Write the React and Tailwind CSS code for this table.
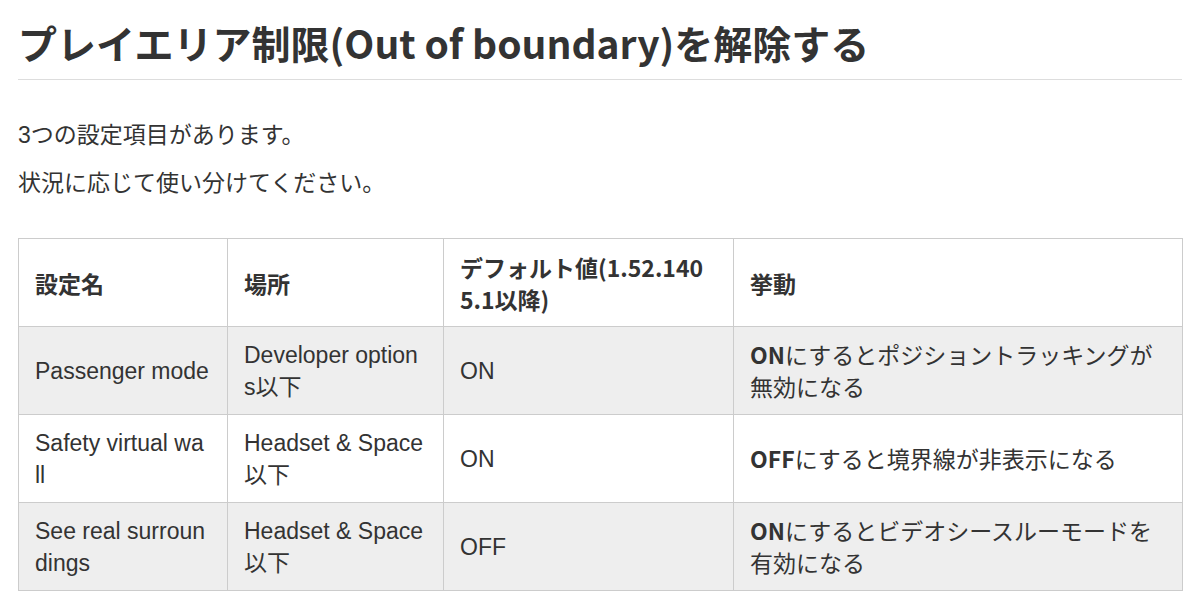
import React from "react";

const jp = "font-['Liberation_Sans','Noto_Sans_CJK_JP',sans-serif]";
const jpBold = "font-['Noto_Sans_CJK_JP',sans-serif] font-bold";

// ── table data (line breaks follow the narrow columns) ──
const rows = [
  {
    name: ["Passenger mode"],
    place: ["Developer option", "s以下"],
    def: "ON",
    lead: "ON",
    act: ["にするとポジショントラッキングが", "無効になる"],
    bg: "bg-[#eeeeee]",
  },
  {
    name: ["Safety virtual wa", "ll"],
    place: ["Headset & Space", "以下"],
    def: "ON",
    lead: "OFF",
    act: ["にすると境界線が非表示になる"],
    bg: "bg-white",
  },
  {
    name: ["See real surroun", "dings"],
    place: ["Headset & Space", "以下"],
    def: "OFF",
    lead: "ON",
    act: ["にするとビデオシースルーモードを", "有効になる"],
    bg: "bg-[#eeeeee]",
  },
];

const Lines = ({ lines }) =>
  lines.map((l, i) => (
    <span key={i} className="block whitespace-nowrap">
      {l}
    </span>
  ));

const cell = "border border-[#cccccc] px-[16px] py-0 align-middle text-left";

export default function App() {
  return (
    <div className={`min-h-[610px] bg-white px-[18px] text-[#333333] ${jp}`}>
      {/* Title */}
      <h1
        className={`pt-[18px] pb-[13px] border-b border-[#dddddd] text-[39px] leading-[48px] whitespace-nowrap ${jpBold}`}
      >
        プレイエリア制限(Out of boundary)を解除する
      </h1>

      <p className="mt-[39px] text-[23px] leading-[32px]">3つの設定項目があります。</p>
      <p className="mt-[16px] text-[23px] leading-[32px]">状況に応じて使い分けてください。</p>

      {/* Settings table */}
      <table className="mt-[39px] w-[1164px] table-fixed border-collapse text-[23px] leading-[32px]">
        <colgroup>
          <col className="w-[209px]" />
          <col className="w-[216px]" />
          <col className="w-[290px]" />
          <col className="w-[449px]" />
        </colgroup>
        <thead>
          <tr className="h-[88px] bg-white">
            <th className={`${cell} ${jpBold}`}>設定名</th>
            <th className={`${cell} ${jpBold}`}>場所</th>
            <th className={`${cell} ${jpBold}`}>
              <Lines lines={["デフォルト値(1.52.140", "5.1以降)"]} />
            </th>
            <th className={`${cell} ${jpBold}`}>挙動</th>
          </tr>
        </thead>
        <tbody>
          {rows.map((r, i) => (
            <tr key={i} className={`h-[88px] ${r.bg}`}>
              <td className={cell}>
                <Lines lines={r.name} />
              </td>
              <td className={cell}>
                <Lines lines={r.place} />
              </td>
              <td className={cell}>{r.def}</td>
              <td className={cell}>
                <span className="block whitespace-nowrap">
                  <span className={jpBold}>{r.lead}</span>
                  {r.act[0]}
                </span>
                {r.act[1] && <span className="block whitespace-nowrap">{r.act[1]}</span>}
              </td>
            </tr>
          ))}
        </tbody>
      </table>
    </div>
  );
}
